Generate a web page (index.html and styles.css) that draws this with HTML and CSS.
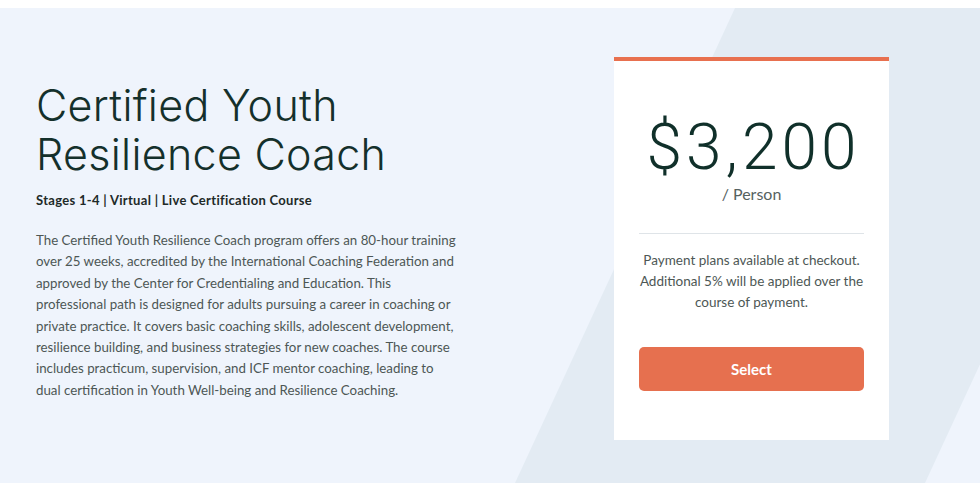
FILE: index.html
```html
<!DOCTYPE html>
<html lang="en">
<head>
<meta charset="utf-8">
<title>Certified Youth Resilience Coach</title>
<link rel="stylesheet" href="styles.css">
</head>
<body>
<div class="topbar"></div>
<section class="hero">
  <div class="hero-inner">
    <div class="info">
      <h1 class="title">Certified Youth<br>Resilience Coach</h1>
      <p class="subtitle">Stages 1-4 | Virtual | Live Certification Course</p>
      <p class="desc">The Certified Youth Resilience Coach program offers an 80-hour training over 25 weeks, accredited by the International Coaching Federation and approved by the Center for Credentialing and Education. This professional path is designed for adults pursuing a career in coaching or private practice. It covers basic coaching skills, adolescent development, resilience building, and business strategies for new coaches. The course includes practicum, supervision, and ICF mentor coaching, leading to dual certification in Youth Well-being and Resilience Coaching.</p>
    </div>
    <div class="card">
      <div class="price">$3,200</div>
      <div class="per">/ Person</div>
      <hr class="divider">
      <p class="note">Payment plans available at checkout. Additional 5% will be applied over the course of payment.</p>
      <button class="select">Select</button>
    </div>
  </div>
</section>
</body>
</html>
```
FILE: styles.css
```css
* { box-sizing: border-box; }
html, body { margin: 0; padding: 0; }
body {
  background: #ffffff;
  font-family: "Lato", "Open Sans", sans-serif;
  color: #14302b;
}
.topbar { height: 8px; background: #ffffff; }
.hero {
  position: relative;
  height: 475px;
  background: #eff4fc;
  overflow: hidden;
}
.hero::before {
  content: "";
  position: absolute;
  inset: 0;
  background: #e3ebf3;
  clip-path: polygon(735px 0, 1145px 0, 925px 475px, 515px 475px);
}
.hero-inner {
  position: relative;
  display: grid;
  grid-template-columns: 430px 275px;
  column-gap: 148px;
  padding-left: 36px;
  align-items: start;
}
.info { padding-top: 73px; }
.title {
  margin: 0;
  font-family: "Inter", "Lato", sans-serif;
  font-weight: 300;
  font-size: 43px;
  line-height: 49px;
  letter-spacing: 0.3px;
  color: #14302b;
}
.subtitle {
  margin: 12px 0 0;
  font-size: 13px;
  line-height: 18px;
  font-weight: 700;
  letter-spacing: 0.3px;
  color: #1e2a28;
}
.desc {
  width: 423.5px;
  margin: 21px 0 0;
  font-size: 13.3px;
  line-height: 21.4px;
  color: #4d5755;
}
.card {
  margin-top: 49px;
  background: #ffffff;
  border-top: 4px solid #e8704f;
  padding: 55px 25px 49px;
  text-align: center;
}
.price {
  font-family: "Roboto", sans-serif;
  font-weight: 300;
  font-size: 64px;
  line-height: 64px;
  letter-spacing: 4px;
  padding-left: 4px;
  color: #10302a;
}
.per {
  margin-top: 4px;
  font-size: 16px;
  line-height: 20px;
  color: #56625f;
}
.divider {
  margin: 29px 0 0;
  border: 0;
  border-top: 1px solid #dfe4e8;
  height: 0;
}
.note {
  margin: 16px 0 0;
  font-size: 13.5px;
  line-height: 21px;
  color: #4d5755;
}
.select {
  display: block;
  width: 100%;
  height: 44px;
  margin-top: 34px;
  border: 0;
  border-radius: 5px;
  background: #e6704f;
  color: #ffffff;
  font-family: "Lato", sans-serif;
  font-weight: 700;
  font-size: 15px;
}
```
